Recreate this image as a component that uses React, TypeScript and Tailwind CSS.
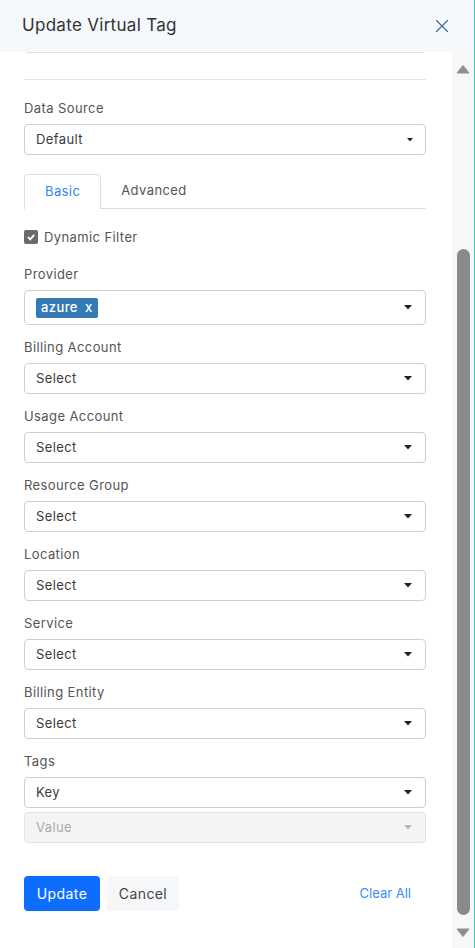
import { X } from 'lucide-react';

const font = { fontFamily: 'Inter, "Open Sans", sans-serif' };

function Caret({ muted = false, small = false }: { muted?: boolean; small?: boolean }) {
    return (
        <svg width={small ? 6 : 8} height={small ? 3.5 : 4.5} viewBox="0 0 8 4.5" className="shrink-0">
            <path d="M0 0 L8 0 L4 4.5 Z" fill={muted ? '#b5b5b5' : '#222'} />
        </svg>
    );
}

function SelectBox({ text = 'Select', disabled = false }: { text?: string; disabled?: boolean }) {
    return (
        <div
            className={`mt-[7px] h-[31px] flex items-center justify-between pl-[11px] pr-[13px] rounded-[4px] border ${
                disabled ? 'bg-[#f3f4f6] border-[#e2e2e2] text-[#aaa]' : 'bg-white border-[#cfcfcf] text-[#3a3a3a]'
            } text-[13px]`}
        >
            <span>{text}</span>
            <Caret muted={disabled} />
        </div>
    );
}

function Field({ label }: { label: string }) {
    return (
        <div className="mt-[13px]">
            <div className="h-[18px] leading-[18px] text-[13px] text-[#555]">{label}</div>
            <SelectBox />
        </div>
    );
}

export default function App() {
    return (
        <div className="w-[475px] h-[948px] flex flex-col bg-white border-r border-[#4cc6c1] overflow-hidden tracking-[0.4px]" style={font}>
            {/* Header */}
            <div className="h-[52px] shrink-0 bg-[#f5f9fe] flex items-center justify-between pl-[22px] pr-[21px]">
                <h2 className="text-[17px] text-[#333] font-normal tracking-[0.3px]">Update Virtual Tag</h2>
                <X size={22} strokeWidth={1.3} className="text-[#3f6c9c]" />
            </div>

            <div className="flex-1 flex min-h-0">
                {/* Scrolled form */}
                <div className="flex-1 overflow-hidden pl-[24px] pr-[26px]">
                    <div className="-mt-[30px] h-[31px] rounded-[4px] border border-[#dcdcdc]" />
                    <div className="mt-[26px] h-px bg-[#e3e3e3]" />

                    <div className="mt-[19px]">
                        <div className="h-[18px] leading-[18px] text-[13px] text-[#555]">Data Source</div>
                        <div className="mt-[7px] h-[31px] flex items-center justify-between pl-[11px] pr-[12px] rounded-[4px] border border-[#cfcfcf] text-[13px] text-[#3a3a3a]">
                            <span>Default</span>
                            <Caret small />
                        </div>
                    </div>

                    {/* Tabs */}
                    <div className="mt-[19px] flex border-b border-[#dedede] text-[13px]">
                        <div className="h-[35px] -mb-px px-[20px] flex items-center rounded-t-[4px] border border-b-0 border-[#dedede] bg-white text-[#2f86f0]">
                            Basic
                        </div>
                        <div className="h-[34px] px-[20px] flex items-center text-[#555]">Advanced</div>
                    </div>

                    <label className="mt-[21px] h-[14px] flex items-center gap-[6px] text-[13px] text-[#555]">
                        <span className="w-[14px] h-[14px] rounded-[2px] bg-[#6a6a6a] flex items-center justify-center">
                            <svg width="10" height="10" viewBox="0 0 10 10">
                                <path d="M2 5.2 L4.2 7.4 L8.2 2.8" stroke="#fff" strokeWidth="1.8" fill="none" />
                            </svg>
                        </span>
                        <span className="pt-[2px]">Dynamic Filter</span>
                    </label>

                    <div className="mt-[21px]">
                        <div className="h-[18px] leading-[18px] text-[13px] text-[#555]">Provider</div>
                        <div className="mt-[7px] h-[35px] flex items-center justify-between pl-[11px] pr-[13px] rounded-[4px] border border-[#cfcfcf]">
                            <span className="h-[20px] px-[5px] flex items-center gap-[7px] rounded-[2px] bg-[#337ab7] text-white text-[13px] font-medium">
                                <span>azure</span>
                                <span>x</span>
                            </span>
                            <Caret />
                        </div>
                    </div>

                    <Field label="Billing Account" />
                    <Field label="Usage Account" />
                    <Field label="Resource Group" />
                    <Field label="Location" />
                    <Field label="Service" />
                    <Field label="Billing Entity" />

                    <div className="mt-[13px]">
                        <div className="h-[18px] leading-[18px] text-[13px] text-[#555]">Tags</div>
                        <SelectBox text="Key" />
                        <div className="-mt-[3px]">
                            <SelectBox text="Value" disabled />
                        </div>
                    </div>

                    <div className="mt-[33px] flex items-center gap-[7px]">
                        <button className="h-[35px] w-[76px] rounded-[4px] bg-[#0d6efd] text-white text-[14px]">Update</button>
                        <button className="h-[35px] w-[72px] rounded-[4px] bg-[#f6f7f9] text-[#444] text-[14px]">Cancel</button>
                        <button className="ml-auto mr-[15px] text-[13px] text-[#3a8ef6] tracking-normal">Clear All</button>
                    </div>
                </div>

                {/* Scrollbar */}
                <div className="w-[22px] shrink-0 bg-[#f7f7f7] flex flex-col items-center">
                    <svg width="14" height="10" viewBox="0 0 14 10" className="mt-[12px]">
                        <path d="M1 9 L7 1.5 L13 9 Z" fill="#8f8f8f" strokeLinejoin="round" stroke="#8f8f8f" strokeWidth="1" />
                    </svg>
                    <div className="mt-[175px] w-[13px] h-[666px] rounded-full bg-[#8a8a8a]" />
                    <svg width="14" height="10" viewBox="0 0 14 10" className="mt-[13px]">
                        <path d="M1 1 L7 8.5 L13 1 Z" fill="#8f8f8f" strokeLinejoin="round" stroke="#8f8f8f" strokeWidth="1" />
                    </svg>
                </div>
            </div>
        </div>
    );
}
